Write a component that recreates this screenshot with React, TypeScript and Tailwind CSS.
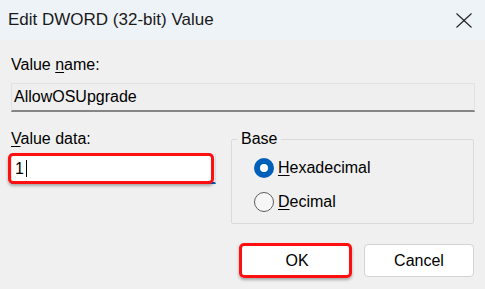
import React from 'react';

// 编辑 DWORD 值对话框
const App: React.FC = () => {
  return (
    <div className="w-[485px] h-[289px] bg-[#f0f0f0] text-black flex flex-col overflow-hidden font-['Liberation_Sans',Arial,sans-serif]">
      {/* 标题栏 */}
      <div className="h-[40px] shrink-0 bg-[#eef3f8] flex items-center justify-between pl-[8px] pr-[13px]">
        <span className="text-[17px] leading-[20px] text-[#1a1a1a]">Edit DWORD (32-bit) Value</span>
        <svg width="16" height="15" viewBox="0 0 16 15" fill="none" stroke="#1f1f1f" strokeWidth="1.1">
          <path d="M0.5 0.5 L15.5 14.5" />
          <path d="M15.5 0.5 L0.5 14.5" />
        </svg>
      </div>

      <div className="flex-1 px-[11px] pt-[16px] text-[16px]">
        <div className="leading-[18px]">
          Value <u className="underline-offset-2">n</u>ame:
        </div>
        <div className="mt-[9px] h-[29px] w-[464px] bg-[#efefef] border border-[#e2e2e2] border-b-2 border-b-[#858585] flex items-center pl-[2px] leading-[18px]">
          AllowOSUpgrade
        </div>

        <div className="mt-[18px] flex justify-between">
          {/* 数值数据 */}
          <div className="w-[205px] flex flex-col">
            <div className="leading-[18px]">
              <u className="underline-offset-2">V</u>alue data:
            </div>
            <div className="relative mt-[6px] h-[30px] bg-white border border-[#e5e5e5] border-b-2 border-b-[#005fb8] flex items-center pl-[3px] leading-[18px]">
              <span>1</span>
              <span className="ml-[2px] h-[17px] w-px bg-black" />
              {/* 红色标注框 */}
              <div className="absolute left-[-4px] right-[1px] top-[-2px] bottom-[-2px] rounded-[5px] border-[3px] border-[#ff0f0f] shadow-[0_2px_3px_rgba(0,0,0,0.3)]" />
            </div>
          </div>

          {/* 进制选择 */}
          <fieldset className="w-[243px] h-[94px] border border-[#dadada] rounded-[2px] pl-[5px]">
            <legend className="px-[4px] leading-[18px]">Base</legend>
            <div className="flex flex-col gap-[14px] pl-[17px] pt-[10px]">
              <div className="flex items-center gap-[4px] h-[20px]">
                <span className="w-[20px] h-[20px] rounded-full bg-[#005fb8] flex items-center justify-center">
                  <span className="w-[8px] h-[8px] rounded-full bg-white" />
                </span>
                <span className="leading-[18px]">
                  <u className="underline-offset-2">H</u>exadecimal
                </span>
              </div>
              <div className="flex items-center gap-[4px] h-[20px]">
                <span className="w-[20px] h-[20px] rounded-full border border-[#5f5f5f] bg-[#f6f6f6]" />
                <span className="leading-[18px]">
                  <u className="underline-offset-2">D</u>ecimal
                </span>
              </div>
            </div>
          </fieldset>
        </div>

        {/* 按钮 */}
        <div className="mt-[20px] flex justify-end gap-[12px]">
          <div className="relative w-[110px] h-[33px] bg-white rounded-[4px] flex items-center justify-center leading-[18px]">
            OK
            <div className="absolute left-[-3px] right-[0px] top-[-1px] bottom-[-1px] rounded-[5px] border-[3px] border-[#ff0f0f] shadow-[0_2px_3px_rgba(0,0,0,0.3)]" />
          </div>
          <div className="w-[110px] h-[33px] bg-white border border-[#d3d3d3] rounded-[4px] flex items-center justify-center leading-[18px]">
            Cancel
          </div>
        </div>
      </div>
    </div>
  );
};

export default App;
